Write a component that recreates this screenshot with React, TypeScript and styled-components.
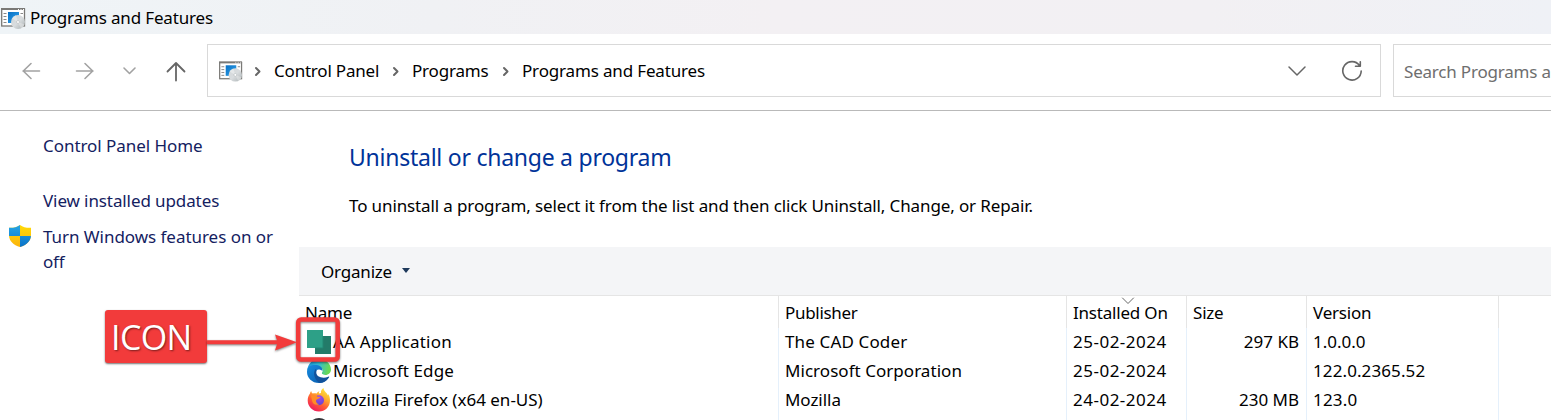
import React from "react";
import styled, { createGlobalStyle } from "styled-components";

const GlobalStyle = createGlobalStyle`
  * { box-sizing: border-box; }
  html, body { margin: 0; background: #fff; overflow: hidden; }
  body { font-family: "Noto Sans", "Open Sans", sans-serif; font-size: 17px; color: #000; }
`;

const Window = styled.div`
  position: relative;
  width: 1551px;
  height: 420px;
  overflow: hidden;
  display: flex;
  flex-direction: column;
  background: #fff;
`;

const Text = styled.span<{ $track?: number; $color?: string }>`
  white-space: nowrap;
  letter-spacing: ${(p) => p.$track ?? -0.2}px;
  color: ${(p) => p.$color ?? "#000"};
  line-height: 25px;
`;

const TitleBar = styled.header`
  flex: none;
  height: 34px;
  display: flex;
  align-items: flex-start;
  gap: 4px;
  padding: 5px 0 0 1px;
  background: linear-gradient(90deg, #eff4f7 0%, #f0f1f4 28%, #f3f0f3 50%, #f2f0f3 78%, #eff1f6 100%);
`;

const WindowIcon = styled.div`
  display: flex;
  padding-top: 3px;
`;

const NavBar = styled.nav`
  flex: none;
  height: 77px;
  display: flex;
  align-items: flex-start;
  padding-top: 10px;
  border-bottom: 1px solid #b9b9b9;
`;

const NavButtons = styled.div`
  flex: none;
  width: 207px;
  height: 53px;
  padding-left: 20px;
  display: flex;
  align-items: center;
`;

const NavIcon = styled.div<{ $gap: number }>`
  display: flex;
  margin-right: ${(p) => p.$gap}px;
`;

const AddressBox = styled.div`
  flex: none;
  width: 1174px;
  height: 53px;
  margin-right: 12px;
  border: 1px solid #d9d9d9;
  display: flex;
  align-items: center;
  padding: 0 17px 0 11px;
`;

const Crumbs = styled.div`
  flex: 1;
  display: flex;
  align-items: center;
`;

const CrumbIcon = styled.div`
  display: flex;
  width: 24px;
  padding-top: 2px;
`;

const Crumb = styled.div<{ $width: number }>`
  width: ${(p) => p.$width}px;
  display: flex;
`;

const Separator = styled.div`
  width: 31px;
  display: flex;
  justify-content: center;
  padding-right: 2px;
`;

const AddressActions = styled.div`
  display: flex;
  align-items: center;
  gap: 34px;
`;

const SearchBox = styled.div`
  flex: none;
  width: 158px;
  height: 53px;
  border: 1px solid #d9d9d9;
  border-right: none;
  display: flex;
  align-items: center;
  overflow: hidden;
  padding: 2px 0 0 10px;
`;

const Body = styled.div`
  flex: 1;
  display: flex;
  min-height: 0;
`;

const Sidebar = styled.aside`
  flex: none;
  width: 299px;
  padding-top: 22px;
  display: flex;
  flex-direction: column;
`;

const SideLink = styled.div<{ $top?: number }>`
  display: grid;
  grid-template-columns: 43px 1fr;
  margin-top: ${(p) => p.$top ?? 0}px;
  line-height: 25px;
`;

const ShieldSlot = styled.div`
  padding: 0 0 0 8px;
  display: flex;
  align-items: flex-start;
`;

const LinkLines = styled.div`
  display: flex;
  flex-direction: column;
`;

const Main = styled.main`
  flex: 1;
  display: flex;
  flex-direction: column;
  min-width: 0;
`;

const Intro = styled.section`
  flex: none;
  height: 136px;
  padding: 29px 0 0 50px;
  display: flex;
  flex-direction: column;
  gap: 19px;
`;

const Heading = styled.h1`
  margin: 0;
  font-size: 23px;
  font-weight: 400;
  line-height: 34px;
  color: #003399;
  letter-spacing: -0.25px;
  white-space: nowrap;
`;

const Toolbar = styled.div`
  flex: none;
  height: 49px;
  background: #f4f5f7;
  border-bottom: 1px solid #e5e5e5;
  display: flex;
  align-items: center;
  gap: 10px;
  padding-left: 22px;
`;

const Row = styled.div<{ $header?: boolean }>`
  flex: none;
  height: ${(p) => (p.$header ? 32 : 29)}px;
  display: grid;
  grid-template-columns: 480px 288px 120px 120px 192px 1fr;
  --rule: ${(p) => (p.$header ? "#e5e5e5" : "#e5f0fb")};
  --lift: ${(p) => (p.$header ? 0 : 2)}px;
`;

const Cell = styled.div<{ $right?: boolean; $icon?: boolean }>`
  display: flex;
  align-items: center;
  gap: 2px;
  justify-content: ${(p) => (p.$right ? "flex-end" : "flex-start")};
  padding: 0 7px var(--lift) ${(p) => (p.$icon ? 8 : 6)}px;
  border-right: 1px solid var(--rule);
  position: relative;
`;

const SortMark = styled.div`
  position: absolute;
  left: 54px;
  top: 1px;
  display: flex;
`;

const Callout = styled.div`
  position: absolute;
  left: 105px;
  top: 310px;
  width: 102px;
  height: 53px;
  border-radius: 3px;
  background: #f23b3b;
  box-shadow: 0 1px 2px rgba(0, 0, 0, 0.55);
  display: flex;
  align-items: center;
  padding: 0 0 0 6px;
  color: #fff;
  font-family: "Open Sans", sans-serif;
  font-size: 34px;
  letter-spacing: -0.6px;
  text-shadow: 1px 1px 2px rgba(0, 0, 0, 0.5);
`;

const Pointer = styled.svg`
  position: absolute;
  left: 200px;
  top: 310px;
`;

const ProgramsIcon = () => (
  <svg width="25" height="22" viewBox="0 0 25 22">
    <defs>
      <linearGradient id="pane" x1="0" y1="0" x2="1" y2="1">
        <stop offset="0" stopColor="#0a70c4" />
        <stop offset="1" stopColor="#2fa5ee" />
      </linearGradient>
      <linearGradient id="disc" x1="0" y1="0" x2="1" y2="1">
        <stop offset="0" stopColor="#d2d7d9" />
        <stop offset=".5" stopColor="#d9dddf" />
        <stop offset="1" stopColor="#a9b0b2" />
      </linearGradient>
    </defs>
    <rect x=".7" y="1" width="22.8" height="17" fill="#fff" stroke="#7a7976" strokeWidth="1.3" />
    <path d="M0 1h24" stroke="#7a7976" strokeWidth="2" />
    <path d="M17 1.5h1M19.5 1.5h1M22 1.5h1" stroke="#fff" />
    <path d="M2.5 5.500h3M2.5 8.500h3M2.5 11.500h3M2.5 14.500h3M19.500 5.500h2.500" stroke="#888" />
    <rect x="7" y="4" width="11" height="11" fill="url(#pane)" />
    <circle cx="17" cy="14" r="7" fill="url(#disc)" />
    <path d="M17 14L11 10.500A7 7 0 0 1 15 7.300z" fill="#f4f5f5" opacity=".5" />
    <path d="M17 14l6.500 2.500A7 7 0 0 1 20 20.300z" fill="#f2f3f3" opacity=".4" />
    <circle cx="17" cy="14" r="1.5" fill="#fff" stroke="#bbc0c2" strokeWidth=".7" />
  </svg>
);

const Stroke = ({ w, h, d, color, width = 1.6 }: { w: number; h: number; d: string; color: string; width?: number }) => (
  <svg width={w} height={h} viewBox={`0 0 ${w} ${h}`} fill="none" stroke={color} strokeWidth={width} strokeLinecap="round" strokeLinejoin="round">
    <path d={d} />
  </svg>
);

const CrumbArrow = () => (
  <Separator>
    <Stroke w={8} h={12} d="M2 3L5.500 6.500L2 10" color="#666" width={2} />
  </Separator>
);

const Shield = () => (
  <svg width="24" height="24" viewBox="0 0 24 24">
    <defs>
      <clipPath id="shieldClip">
        <path d="M12 1C9 3.400 5 4 1 3.800V11C1 17 5.500 21 12 23C18.500 21 23 17 23 11V3.800C19 4 15 3.400 12 1Z" />
      </clipPath>
      <linearGradient id="gold" x1="0" y1="0" x2="0" y2="1">
        <stop offset="0" stopColor="#ffdc08" />
        <stop offset="1" stopColor="#fbb20d" />
      </linearGradient>
      <linearGradient id="shieldBlue" x1="0" y1="0" x2="0" y2="1">
        <stop offset="0" stopColor="#28a8e6" />
        <stop offset="1" stopColor="#0870c8" />
      </linearGradient>
    </defs>
    <g clipPath="url(#shieldClip)">
      <path d="M0 0h24v24H0z" fill="url(#gold)" />
      <path d="M0 0h12v12H0zM12 12h12v12H12z" fill="url(#shieldBlue)" />
    </g>
  </svg>
);

const AppIcon = () => (
  <svg width="24" height="24" viewBox="0 0 24 24">
    <path d="M8 6h16v18H8z" fill="#237b69" />
    <path d="M0 0h16v18H0z" fill="#2da087" />
    <path d="M8 18h8V6" fill="none" stroke="#238672" />
  </svg>
);

const EdgeIcon = () => (
  <svg width="24" height="24" viewBox="0 0 24 24">
    <defs>
      <linearGradient id="edgeTop" x1="0" y1="0" x2="1" y2=".2">
        <stop offset="0" stopColor="#1689d6" />
        <stop offset=".5" stopColor="#30bddb" />
        <stop offset="1" stopColor="#69d955" />
      </linearGradient>
      <linearGradient id="edgeLow" x1="0" y1="0" x2="1" y2="1">
        <stop offset="0" stopColor="#178ce0" />
        <stop offset="1" stopColor="#0756a7" />
      </linearGradient>
    </defs>
    <path d="M0 12C1 4 6 0 12 0C19 0 24 5 24 10.500C24 15 19.500 17 16 15.500C14.500 14.800 14.500 14 15.300 13C17 10 13.500 7.500 9.500 7.500C5 7.500 1 9 0 12Z" fill="url(#edgeTop)" />
    <path d="M0 13C0 7 5 5.500 9.500 6C14 6.500 16 9.500 15.300 12C11 9 9 11 9 14C9 19 16 21 21.500 18.500C19 23 15 24 12 24C5 24 0 19 0 13Z" fill="url(#edgeLow)" />
    <path d="M8.500 10C5.500 14 7.500 21 12.500 23.800C17 23.800 20 21.500 22 18.500C22.500 17.600 22 17.300 21.300 17.700C15.500 20.300 9 17.500 9.300 13.500C9.300 12 9.700 10.800 8.500 10Z" fill="#11529b" />
    <path d="M15.300 12.500C14 14 14.500 15 16 15.700C18 16.500 21 16 22.500 14.800C22 17.500 18.500 18.500 15 18C11.500 17 10 14.500 11 12.200C12 10.400 14.500 10.500 15.300 12.500Z" fill="#fff" />
  </svg>
);

const FirefoxIcon = () => (
  <svg width="24" height="24" viewBox="0 0 24 24">
    <defs>
      <linearGradient id="fire" x1=".85" y1="0" x2=".25" y2="1">
        <stop offset="0" stopColor="#fff044" />
        <stop offset=".35" stopColor="#ffb02e" />
        <stop offset=".65" stopColor="#ff5a36" />
        <stop offset="1" stopColor="#ee1561" />
      </linearGradient>
      <radialGradient id="globe" cx=".55" cy=".2" r=".9">
        <stop offset="0" stopColor="#a34aed" />
        <stop offset="1" stopColor="#5a45c9" />
      </radialGradient>
    </defs>
    <path d="M3 5.500C3.200 4.500 3.700 3.500 4.300 3C4.300 4.200 4.800 5 5.700 5.500C7 5 8.500 5 9.700 5.500C10.400 4.200 11.500 3.500 12.500 3.300C11.800 4.300 11.700 5 12 5.500L14 5C13.600 3 14.600 1 16.500 0C16.700 3.500 20 4.500 21 7.500C21.300 7 21.300 6.300 21.200 5.800C22.500 8 23 10 23 12.500C23 19 18 23.500 12 23.500C5.500 23.500 0.700 18.500 0.700 12.500C0.700 9.800 1.500 7.300 3 5.500Z" fill="url(#fire)" />
    <circle cx="12" cy="12.300" r="5" fill="url(#globe)" />
    <path d="M4 7.500C6.500 6.300 9 7 10.500 8.800L13.500 9C12.500 10.700 10.500 10.700 9.200 12C8.800 13 9.200 15.500 12 16.200C9 18 5.500 16 5 12.500Z" fill="#ff8c26" />
  </svg>
);

const DarkIcon = () => (
  <svg width="24" height="24" viewBox="0 0 24 24">
    <circle cx="12" cy="12" r="11" fill="#333438" />
  </svg>
);

type Program = {
  icon: React.ReactNode;
  name: string;
  nameTrack: number;
  publisher: string;
  publisherTrack: number;
  date: string;
  size: string;
  version: string;
  versionTrack: number;
};

const programs: Program[] = [
  { icon: <AppIcon />, name: "AA Application", nameTrack: 0.23, publisher: "The CAD Coder", publisherTrack: 0.14, date: "25-02-2024", size: "297 KB", version: "1.0.0.0", versionTrack: 0 },
  { icon: <EdgeIcon />, name: "Microsoft Edge", nameTrack: 0.08, publisher: "Microsoft Corporation", publisherTrack: 0.04, date: "25-02-2024", size: "", version: "122.0.2365.52", versionTrack: 0.1 },
  { icon: <FirefoxIcon />, name: "Mozilla Firefox (x64 en-US)", nameTrack: 0, publisher: "Mozilla", publisherTrack: -0.05, date: "24-02-2024", size: "230 MB", version: "123.0", versionTrack: 0.2 },
];

const link = "#14215f";

export default function App() {
  return (
    <Window>
      <GlobalStyle />
      <TitleBar>
        <WindowIcon><ProgramsIcon /></WindowIcon>
        <Text $track={-0.16}>Programs and Features</Text>
      </TitleBar>
      <NavBar>
        <NavButtons>
          <NavIcon $gap={32}><Stroke w={22} h={20} d="M19.500 10H3M11 2.500L3.300 10L11 17.500" color="#a2a2a2" /></NavIcon>
          <NavIcon $gap={25}><Stroke w={22} h={20} d="M2.500 10H19M11 2.500L18.700 10L11 17.500" color="#a2a2a2" /></NavIcon>
          <NavIcon $gap={26}><Stroke w={18} h={20} d="M3 7L8.500 12.500L14 7" color="#a2a2a2" /></NavIcon>
          <NavIcon $gap={0}><Stroke w={22} h={22} d="M11 20.500V3M2.500 11.500L11 3L19.500 11.500" color="#666" width={1.8} /></NavIcon>
        </NavButtons>
        <AddressBox>
          <Crumbs>
            <CrumbIcon><ProgramsIcon /></CrumbIcon>
            <CrumbArrow />
            <Crumb $width={107}><Text>Control Panel</Text></Crumb>
            <CrumbArrow />
            <Crumb $width={79}><Text>Programs</Text></Crumb>
            <CrumbArrow />
            <Text $track={-0.16}>Programs and Features</Text>
          </Crumbs>
          <AddressActions>
            <Stroke w={20} h={14} d="M2 3L10 11L18 3" color="#666" width={1.5} />
            <Stroke w={22} h={22} d="M18.500 5.500A9.200 9.200 0 1 0 20.200 11M19.300 1.800V6.300H14.500" color="#666" width={1.6} />
          </AddressActions>
        </AddressBox>
        <SearchBox>
          <Text $color="#6e6e6e">Search Programs a</Text>
        </SearchBox>
      </NavBar>
      <Body>
        <Sidebar>
          <SideLink><span /><Text $track={-0.05} $color={link}>Control Panel Home</Text></SideLink>
          <SideLink $top={30}><span /><Text $track={-0.1} $color={link}>View installed updates</Text></SideLink>
          <SideLink $top={11}>
            <ShieldSlot><Shield /></ShieldSlot>
            <LinkLines>
              <Text $track={-0.04} $color={link}>Turn Windows features on or</Text>
              <Text $color={link}>off</Text>
            </LinkLines>
          </SideLink>
        </Sidebar>
        <Main>
          <Intro>
            <Heading>Uninstall or change a program</Heading>
            <Text $track={-0.12}>To uninstall a program, select it from the list and then click Uninstall, Change, or Repair.</Text>
          </Intro>
          <Toolbar>
            <Text>Organize</Text>
            <svg width="8" height="6" viewBox="0 0 8 6"><path d="M0 0h8L4 5z" fill="#1e395b" /></svg>
          </Toolbar>
          <Row $header>
            <Cell><Text>Name</Text></Cell>
            <Cell><Text $track={-0.3}>Publisher</Text></Cell>
            <Cell>
              <SortMark><Stroke w={14} h={8} d="M1.500 1L7 6.500L12.500 1" color="#666" width={1} /></SortMark>
              <Text>Installed On</Text>
            </Cell>
            <Cell><Text>Size</Text></Cell>
            <Cell><Text>Version</Text></Cell>
          </Row>
          {programs.map((p) => (
            <Row key={p.name}>
              <Cell $icon>{p.icon}<Text $track={p.nameTrack}>{p.name}</Text></Cell>
              <Cell><Text $track={p.publisherTrack}>{p.publisher}</Text></Cell>
              <Cell><Text $track={0.5}>{p.date}</Text></Cell>
              <Cell $right><Text $track={0}>{p.size}</Text></Cell>
              <Cell><Text $track={p.versionTrack}>{p.version}</Text></Cell>
            </Row>
          ))}
          <Row>
            <Cell $icon><DarkIcon /></Cell>
            <Cell /><Cell /><Cell /><Cell />
          </Row>
        </Main>
      </Body>
      <Callout>ICON</Callout>
      <Pointer width="150" height="60" viewBox="0 0 150 60">
        <g style={{ filter: "drop-shadow(0 1px 1px rgba(0,0,0,.5))" }}>
          <path d="M7 30.200H77L75 24.500L97 32.200L75 40.500L77 34.200H7Z" fill="#f23b3b" />
          <rect x="98.200" y="9.500" width="39.500" height="40" rx="3" fill="none" stroke="#f23b3b" strokeWidth="4.500" />
        </g>
      </Pointer>
    </Window>
  );
}
